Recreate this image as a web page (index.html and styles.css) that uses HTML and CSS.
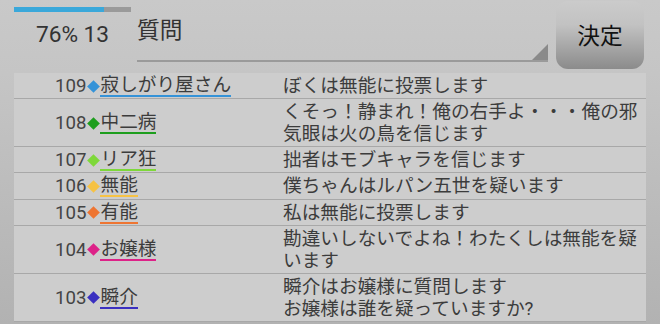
FILE: index.html
```html
<!DOCTYPE html>
<html lang="ja">
<head>
<meta charset="utf-8">
<title>質問</title>
<link rel="stylesheet" href="styles.css">
</head>
<body>
<div class="screen">
  <header class="top">
    <div class="status">
      <div class="bar"><div class="bar-fill" style="width:77%"></div></div>
      <div class="status-text">76% 13</div>
    </div>
    <div class="input">
      <span class="input-text">質問</span>
      <span class="input-corner"></span>
    </div>
    <button class="decide">決定</button>
  </header>
  <ul class="log">
    <li class="row">
      <div class="who"><span class="num">109</span><span class="gem c-blue"></span><span class="name u-blue">寂しがり屋さん</span></div>
      <div class="msg">ぼくは無能に投票します</div>
    </li>
    <li class="row">
      <div class="who"><span class="num">108</span><span class="gem c-green"></span><span class="name u-green">中二病</span></div>
      <div class="msg">くそっ！静まれ！俺の右手よ・・・俺の邪気眼は火の鳥を信じます</div>
    </li>
    <li class="row">
      <div class="who"><span class="num">107</span><span class="gem c-lime"></span><span class="name u-lime">リア狂</span></div>
      <div class="msg">拙者はモブキャラを信じます</div>
    </li>
    <li class="row">
      <div class="who"><span class="num">106</span><span class="gem c-yellow"></span><span class="name u-yellow">無能</span></div>
      <div class="msg">僕ちゃんはルパン五世を疑います</div>
    </li>
    <li class="row">
      <div class="who"><span class="num">105</span><span class="gem c-orange"></span><span class="name u-orange">有能</span></div>
      <div class="msg">私は無能に投票します</div>
    </li>
    <li class="row">
      <div class="who"><span class="num">104</span><span class="gem c-pink"></span><span class="name u-pink">お嬢様</span></div>
      <div class="msg">勘違いしないでよね！わたくしは無能を疑います</div>
    </li>
    <li class="row">
      <div class="who"><span class="num">103</span><span class="gem c-indigo"></span><span class="name u-indigo">瞬介</span></div>
      <div class="msg">瞬介はお嬢様に質問します<br>お嬢様は誰を疑っていますか?</div>
    </li>
  </ul>
</div>
</body>
</html>
```

FILE: styles.css
```css
* { box-sizing: border-box; }
html, body { margin: 0; padding: 0; }
body {
  width: 660px;
  height: 324px;
  overflow: hidden;
  font-family: Roboto, "Noto Sans CJK JP", sans-serif;
  color: #3c3c3c;
  background: linear-gradient(to bottom, #c9c9c9 0px, #c5c5c5 73px, #b2b2b2 324px);
}
.screen {
  padding: 0 14px;
}
.top {
  display: flex;
  align-items: flex-start;
  height: 73px;
}
.status {
  width: 117px;
  padding-top: 7px;
  display: flex;
  flex-direction: column;
  align-items: center;
}
.bar {
  width: 100%;
  height: 5px;
  background: #9a9a9a;
}
.bar-fill {
  height: 100%;
  background: #3aa8da;
}
.status-text {
  margin-top: 9px;
  font-size: 22.7px;
  line-height: 28px;
  color: #333;
}
.input {
  margin-left: 6px;
  width: 411px;
  height: 62px;
  border-bottom: 2px solid #9a9a9a;
  position: relative;
  padding-top: 16px;
}
.input-text {
  font-size: 22.7px;
  line-height: 30px;
  color: #333;
}
.input-corner {
  position: absolute;
  right: 0;
  bottom: 0;
  width: 0;
  height: 0;
  border-style: solid;
  border-width: 0 0 16px 16px;
  border-color: transparent transparent #8a8a8a transparent;
}
.decide {
  margin: 1px 0 0 8px;
  width: 88px;
  height: 68px;
  border: none;
  border-radius: 12px;
  background: linear-gradient(to bottom, #cbcbcb 0%, #c2c2c2 35%, #8b8b8b 100%);
  font-family: Roboto, "Noto Sans CJK JP", sans-serif;
  font-size: 22.7px;
  color: #111;
  padding: 0 0 2px;
}
.log {
  list-style: none;
  margin: 0;
  padding: 0;
  background: #cdcdcd;
}
.row {
  display: flex;
  align-items: center;
  padding: 2px 0 1.15px;
  border-bottom: 1px solid #a8a8a8;
  line-height: 22px;
  font-size: 18.67px;
}
.who {
  width: 269px;
  flex: none;
  padding-left: 41px;
  display: flex;
  align-items: center;
}
.num {
  color: #444;
}
.gem {
  display: inline-block;
  width: 9px;
  height: 9px;
  margin: 0 2px 0 3px;
  transform: rotate(45deg);
}
.name {
  display: inline-block;
  line-height: 20px;
  border-bottom: 2px solid;
  color: #3c3c3c;
}
.msg {
  flex: 1;
  color: #3c3c3c;
}
.c-blue { background: #3593d8; }
.c-green { background: #1e9e1e; }
.c-lime { background: #7ed83a; }
.c-yellow { background: #f6c244; }
.c-orange { background: #ee7532; }
.c-pink { background: #dd2288; }
.c-indigo { background: #3a2fc0; }
.u-blue { border-color: #3593d8; }
.u-green { border-color: #1e9e1e; }
.u-lime { border-color: #7ed83a; }
.u-yellow { border-color: #f6c244; }
.u-orange { border-color: #ee7532; }
.u-pink { border-color: #dd2288; }
.u-indigo { border-color: #3a2fc0; }
```
